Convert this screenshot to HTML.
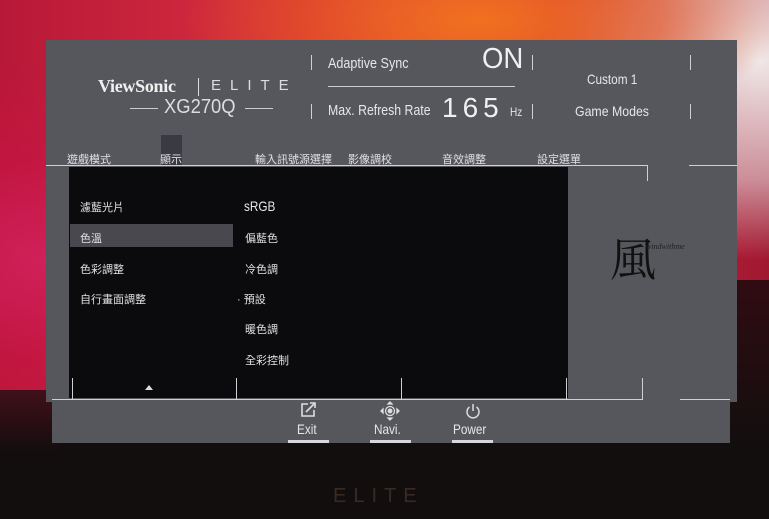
<!DOCTYPE html>
<html><head><meta charset="utf-8"><style>
*{margin:0;padding:0;box-sizing:border-box}
body{width:769px;height:519px;overflow:hidden;position:relative;font-family:"Liberation Sans","Noto Sans CJK TC",sans-serif;color:#e6e6ea;
background:
radial-gradient(ellipse 260px 200px at 40px 260px,#d0205a 0%,rgba(200,20,70,0.6) 50%,transparent 100%),
radial-gradient(ellipse 300px 120px at 480px 20px,#f07020 0%,rgba(230,90,30,0.6) 60%,transparent 100%),
radial-gradient(ellipse 220px 200px at 760px 60px,#f0e8e8 0%,rgba(230,220,220,0.6) 60%,transparent 100%),
linear-gradient(90deg,#b81838 0%,#d83040 40%,#e85040 60%,#c02040 85%,#a01830 100%);}
.n{transform:scaleX(.84);transform-origin:0 0}
.bezel{position:absolute;left:0;top:443px;width:769px;height:76px;background:#120e0e}
.lside{position:absolute;left:0;top:390px;width:60px;height:60px;background:linear-gradient(#40101a,#150d0e)}
.rside{position:absolute;left:730px;top:280px;width:39px;height:170px;background:linear-gradient(#300c12,#120e0e)}
.osd{position:absolute;left:46px;top:40px;width:691px;height:362px;background:#56565d}
.bot{position:absolute;left:52px;top:400px;width:678px;height:43px;background:#56565d}
.t{position:absolute;white-space:nowrap}
.dark{position:absolute;left:69px;top:167px;width:499px;height:231px;background:#0b0a0d}
.sel{position:absolute;left:70px;top:224px;width:163px;height:23px;background:#48484e}
.hl{position:absolute;height:1px;background:#cfcfd4}
.vl{position:absolute;width:1px;background:#cfcfd4}
.cjk{font-size:11px;color:#e0e0e4}
.u{position:absolute;height:3px;background:#d8d8dc;top:440px;width:41px}
</style></head><body>
<div class="bezel"></div><div class="lside"></div><div class="rside"></div>
<div class="osd"></div><div class="bot"></div>
<div class="t" style="left:98px;top:76px;font-family:'Liberation Serif',serif;font-weight:bold;font-size:18px;letter-spacing:-0.3px;color:#f0f0f0">ViewSonic</div>
<div class="vl" style="left:198px;top:78px;height:18px;background:#ddd"></div>
<div class="t" style="left:211px;top:77px;font-size:15px;letter-spacing:9px;color:#ddd">ELITE</div>
<div class="hl" style="left:130px;top:108px;width:28px;background:#ccc"></div>
<div class="t n" style="left:164px;top:96px;font-size:20px;color:#ddd;transform:scaleX(.92)">XG270Q</div>
<div class="hl" style="left:245px;top:108px;width:28px;background:#ccc"></div>
<div class="vl" style="left:311px;top:55px;height:15px"></div>
<div class="vl" style="left:311px;top:104px;height:15px"></div>
<div class="t n" style="left:328px;top:55px;font-size:15px">Adaptive Sync</div>
<div class="t n" style="left:482px;top:43px;font-size:29px;color:#f0f0f0;transform:scaleX(.95)">ON</div>
<div class="hl" style="left:328px;top:86px;width:187px;background:#ccc"></div>
<div class="t n" style="left:328px;top:102px;font-size:15px;transform:scaleX(.82)">Max. Refresh Rate</div>
<div class="t" style="left:442px;top:92px;font-size:28px;letter-spacing:5px;color:#f0f0f0">165</div>
<div class="t n" style="left:510px;top:105px;font-size:12px">Hz</div>
<div class="vl" style="left:532px;top:55px;height:15px"></div>
<div class="vl" style="left:532px;top:104px;height:15px"></div>
<div class="t n" style="left:587px;top:71px;font-size:14px">Custom 1</div>
<div class="t n" style="left:575px;top:103px;font-size:14px;transform:scaleX(.88)">Game Modes</div>
<div class="vl" style="left:690px;top:55px;height:15px"></div>
<div class="vl" style="left:690px;top:104px;height:15px"></div>
<div style="position:absolute;left:161px;top:135px;width:21px;height:30px;background:#3a3a42"></div>
<div class="t cjk" style="left:67px;top:151px">遊戲模式</div>
<div class="t cjk" style="left:160px;top:151px">顯示</div>
<div class="t cjk" style="left:255px;top:151px">輸入訊號源選擇</div>
<div class="t cjk" style="left:348px;top:151px">影像調校</div>
<div class="t cjk" style="left:442px;top:151px">音效調整</div>
<div class="t cjk" style="left:537px;top:151px">設定選單</div>
<div class="hl" style="left:46px;top:165px;width:602px"></div>
<div class="vl" style="left:647px;top:165px;height:16px"></div>
<div class="hl" style="left:689px;top:165px;width:48px"></div>
<div class="dark"></div><div class="sel"></div>
<div class="t cjk" style="left:80px;top:199px">濾藍光片</div>
<div class="t cjk" style="left:80px;top:230px">色溫</div>
<div class="t cjk" style="left:80px;top:261px">色彩調整</div>
<div class="t cjk" style="left:80px;top:291px">自行畫面調整</div>
<div class="t n" style="left:244px;top:198px;font-size:14px">sRGB</div>
<div class="t cjk" style="left:245px;top:230px">偏藍色</div>
<div class="t cjk" style="left:245px;top:261px">冷色調</div>
<div class="t cjk" style="left:237px;top:291px">· 預設</div>
<div class="t cjk" style="left:245px;top:321px">暖色調</div>
<div class="t cjk" style="left:245px;top:352px">全彩控制</div>
<div style="position:absolute;left:145px;top:385px;border-left:4px solid transparent;border-right:4px solid transparent;border-bottom:5px solid #ddd"></div>
<div class="hl" style="left:52px;top:399px;width:591px"></div>
<div class="hl" style="left:680px;top:399px;width:50px"></div>
<div class="vl" style="left:72px;top:378px;height:21px"></div>
<div class="vl" style="left:236px;top:378px;height:21px"></div>
<div class="vl" style="left:401px;top:378px;height:21px"></div>
<div class="vl" style="left:566px;top:378px;height:21px"></div>
<div class="vl" style="left:642px;top:378px;height:21px"></div>
<div class="t" style="left:610px;top:224px;font-family:'Noto Serif CJK SC',serif;font-size:46px;color:#111">風</div>
<div class="t" style="left:646px;top:242px;font-family:'Liberation Serif',serif;font-style:italic;font-size:8px;color:#222">windwithme</div>
<svg style="position:absolute;left:298px;top:401px" width="20" height="18" viewBox="0 0 20 18"><path d="M10 3H4v12h12V9" fill="none" stroke="#ddd" stroke-width="1.6"/><path d="M8 11l9-9M12 2h5v5" fill="none" stroke="#ddd" stroke-width="1.6"/></svg>
<svg style="position:absolute;left:380px;top:401px" width="20" height="20" viewBox="0 0 20 20" fill="none" stroke="#ddd" stroke-width="1.3"><circle cx="10" cy="10" r="4.5"/><circle cx="10" cy="10" r="1.8" fill="#ddd"/><path d="M10 1l-2 2h4zM10 19l-2-2h4zM1 10l2-2v4zM19 10l-2-2v4z" fill="#ddd"/></svg>
<svg style="position:absolute;left:464px;top:402px" width="18" height="18" viewBox="0 0 18 18" fill="none" stroke="#ddd" stroke-width="1.5"><path d="M5.5 5a6 6 0 1 0 7 0"/><path d="M9 2v7"/></svg>
<div class="t n" style="left:297px;top:421px;font-size:14px">Exit</div>
<div class="t n" style="left:374px;top:421px;font-size:14px">Navi.</div>
<div class="t n" style="left:453px;top:421px;font-size:14px">Power</div>
<div class="u" style="left:288px"></div><div class="u" style="left:370px"></div><div class="u" style="left:452px"></div>
<div class="t" style="left:333px;top:485px;font-size:20px;letter-spacing:7px;color:#3a2a24">ELITE</div>
</body></html>
